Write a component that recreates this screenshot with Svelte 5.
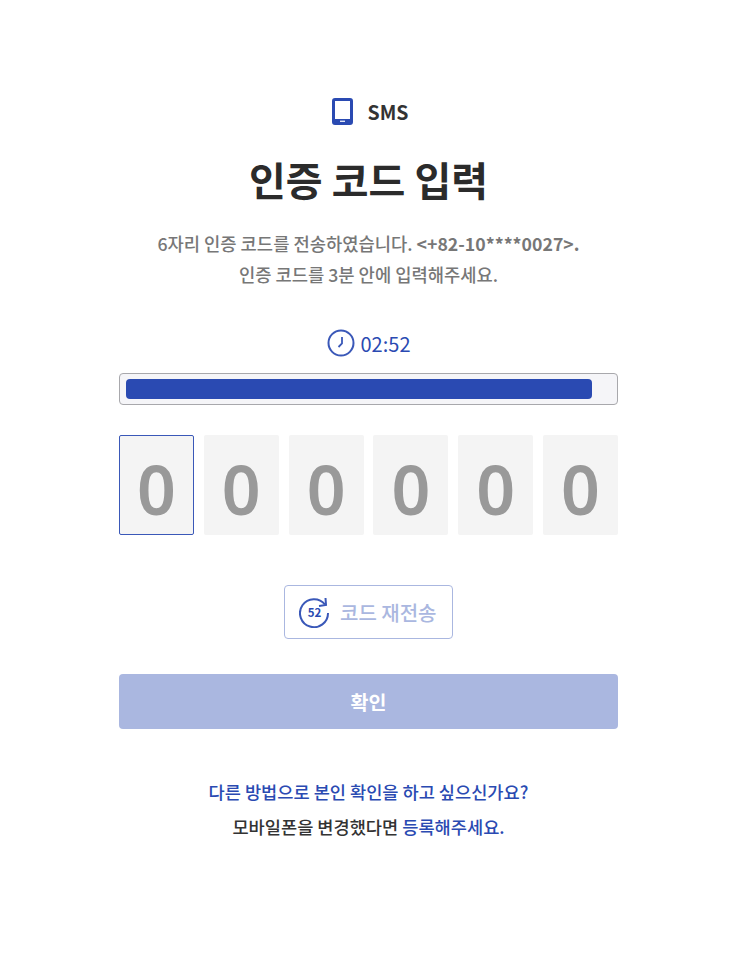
<script lang="ts">
	const digits = ['0', '0', '0', '0', '0', '0']
</script>

<main>
	<div class="method">
		<svg class="phone" width="21" height="27" viewBox="0 0 21 27">
			<rect x="1.5" y="1.5" width="18" height="24" rx="1.5" fill="none" stroke="#2a4ab2" stroke-width="3" />
			<rect x="2" y="21" width="17" height="5" fill="#2a4ab2" />
			<rect x="8" y="22.6" width="5" height="1.4" fill="#dfe4f5" />
		</svg>
		<span>SMS</span>
	</div>

	<h1>인증 코드 입력</h1>

	<p class="desc">6자리 인증 코드를 전송하였습니다. <b>&lt;+82-10****0027&gt;.</b></p>
	<p class="desc second">인증 코드를 3분 안에 입력해주세요.</p>

	<div class="timer">
		<svg width="28" height="28" viewBox="0 0 28 28" fill="none" stroke="#3a58b8">
			<circle cx="14" cy="14" r="12.5" stroke-width="2" />
			<path d="M15 8v6.5l-3.5 3.5" stroke-width="1.8" />
		</svg>
		<span>02:52</span>
	</div>

	<div class="progress">
		<div class="bar" style="width: {96}%"></div>
	</div>

	<div class="code">
		{#each digits as d, i}
			<div class="cell" class:active={i === 0}>{d}</div>
		{/each}
	</div>

	<div class="resend-row">
		<button class="resend">
			<svg width="32" height="32" viewBox="0 0 32 32" fill="none" stroke="#3a58b8" stroke-width="2">
				<path d="M26 8.5A14 14 0 1 0 29 17" />
				<path d="M26.5 2l.5 7-7 1" />
				<text x="15.5" y="21" text-anchor="middle" class="secs">52</text>
			</svg>
			<span>코드 재전송</span>
		</button>
	</div>

	<button class="confirm">확인</button>

	<p class="link first"><a href="#other">다른 방법으로 본인 확인을 하고 싶으신가요?</a></p>
	<p class="link">모바일폰을 변경했다면 <a href="#register">등록해주세요.</a></p>
</main>

<style>
	:global(body) {
		background: #fff;
	}

	main {
		box-sizing: border-box;
		width: 756px;
		height: 964px;
		padding: 96px 138px 0 119px;
		font-family: 'Noto Sans CJK KR', 'Noto Sans', sans-serif;
		color: #333;
		text-align: center;
	}

	.method {
		display: flex;
		justify-content: center;
		align-items: center;
		gap: 15px;
		height: 30px;
		font-size: 19.5px;
		font-weight: 700;
	}

	.phone {
		margin-left: 3px;
	}

	h1 {
		margin: 22px 0 0;
		font-size: 40px;
		line-height: 62px;
		font-weight: 700;
		color: #2b2b2b;
	}

	.desc {
		margin: 20px 0 0;
		font-size: 17.7px;
		line-height: 26px;
		font-weight: 500;
		color: #777;
	}

	.desc b {
		font-weight: 700;
	}

	.desc.second {
		margin-top: 5px;
	}

	.timer {
		display: flex;
		justify-content: center;
		align-items: center;
		gap: 6px;
		margin-top: 40px;
		height: 32px;
		font-size: 20px;
		color: #2a4ab2;
	}

	.progress {
		box-sizing: border-box;
		margin-top: 14px;
		height: 32px;
		padding: 5px 6px;
		background: #f5f5f8;
		border: 1px solid #a8a8ac;
		border-radius: 4px;
	}

	.bar {
		height: 100%;
		background: #2a4ab2;
		border-radius: 4px;
	}

	.code {
		display: flex;
		justify-content: space-between;
		margin-top: 30px;
	}

	.cell {
		box-sizing: border-box;
		width: 75px;
		height: 100px;
		background: #f4f4f4;
		border-radius: 2px;
		font-family: 'Noto Sans', sans-serif;
		font-size: 68px;
		font-weight: 600;
		line-height: 108px;
		color: #999;
	}

	.cell.active {
		border: 1px solid #3a58b8;
		line-height: 106px;
	}

	.resend-row {
		display: flex;
		justify-content: center;
		margin-top: 50px;
	}

	.resend {
		display: flex;
		align-items: center;
		gap: 9px;
		box-sizing: border-box;
		width: 169px;
		height: 54px;
		padding: 0 0 0 14px;
		background: #fff;
		border: 1px solid #aab7e0;
		border-radius: 4px;
		font-family: inherit;
		font-size: 20px;
		font-weight: 500;
		color: #aab7e0;
	}

	.secs {
		font-size: 11.5px;
		font-weight: 700;
		fill: #2a4ab2;
		stroke: none;
	}

	.confirm {
		display: block;
		width: 100%;
		height: 55px;
		margin-top: 35px;
		background: #aab7e0;
		border: none;
		border-radius: 4px;
		font-family: inherit;
		font-size: 19.5px;
		font-weight: 700;
		color: #fff;
	}

	.link {
		margin: 0;
		margin-top: 9px;
		font-size: 17.6px;
		line-height: 26px;
		font-weight: 500;
		color: #333;
	}

	.link.first {
		margin-top: 50px;
	}

	a {
		color: #2a4ab2;
		text-decoration: none;
	}
</style>
